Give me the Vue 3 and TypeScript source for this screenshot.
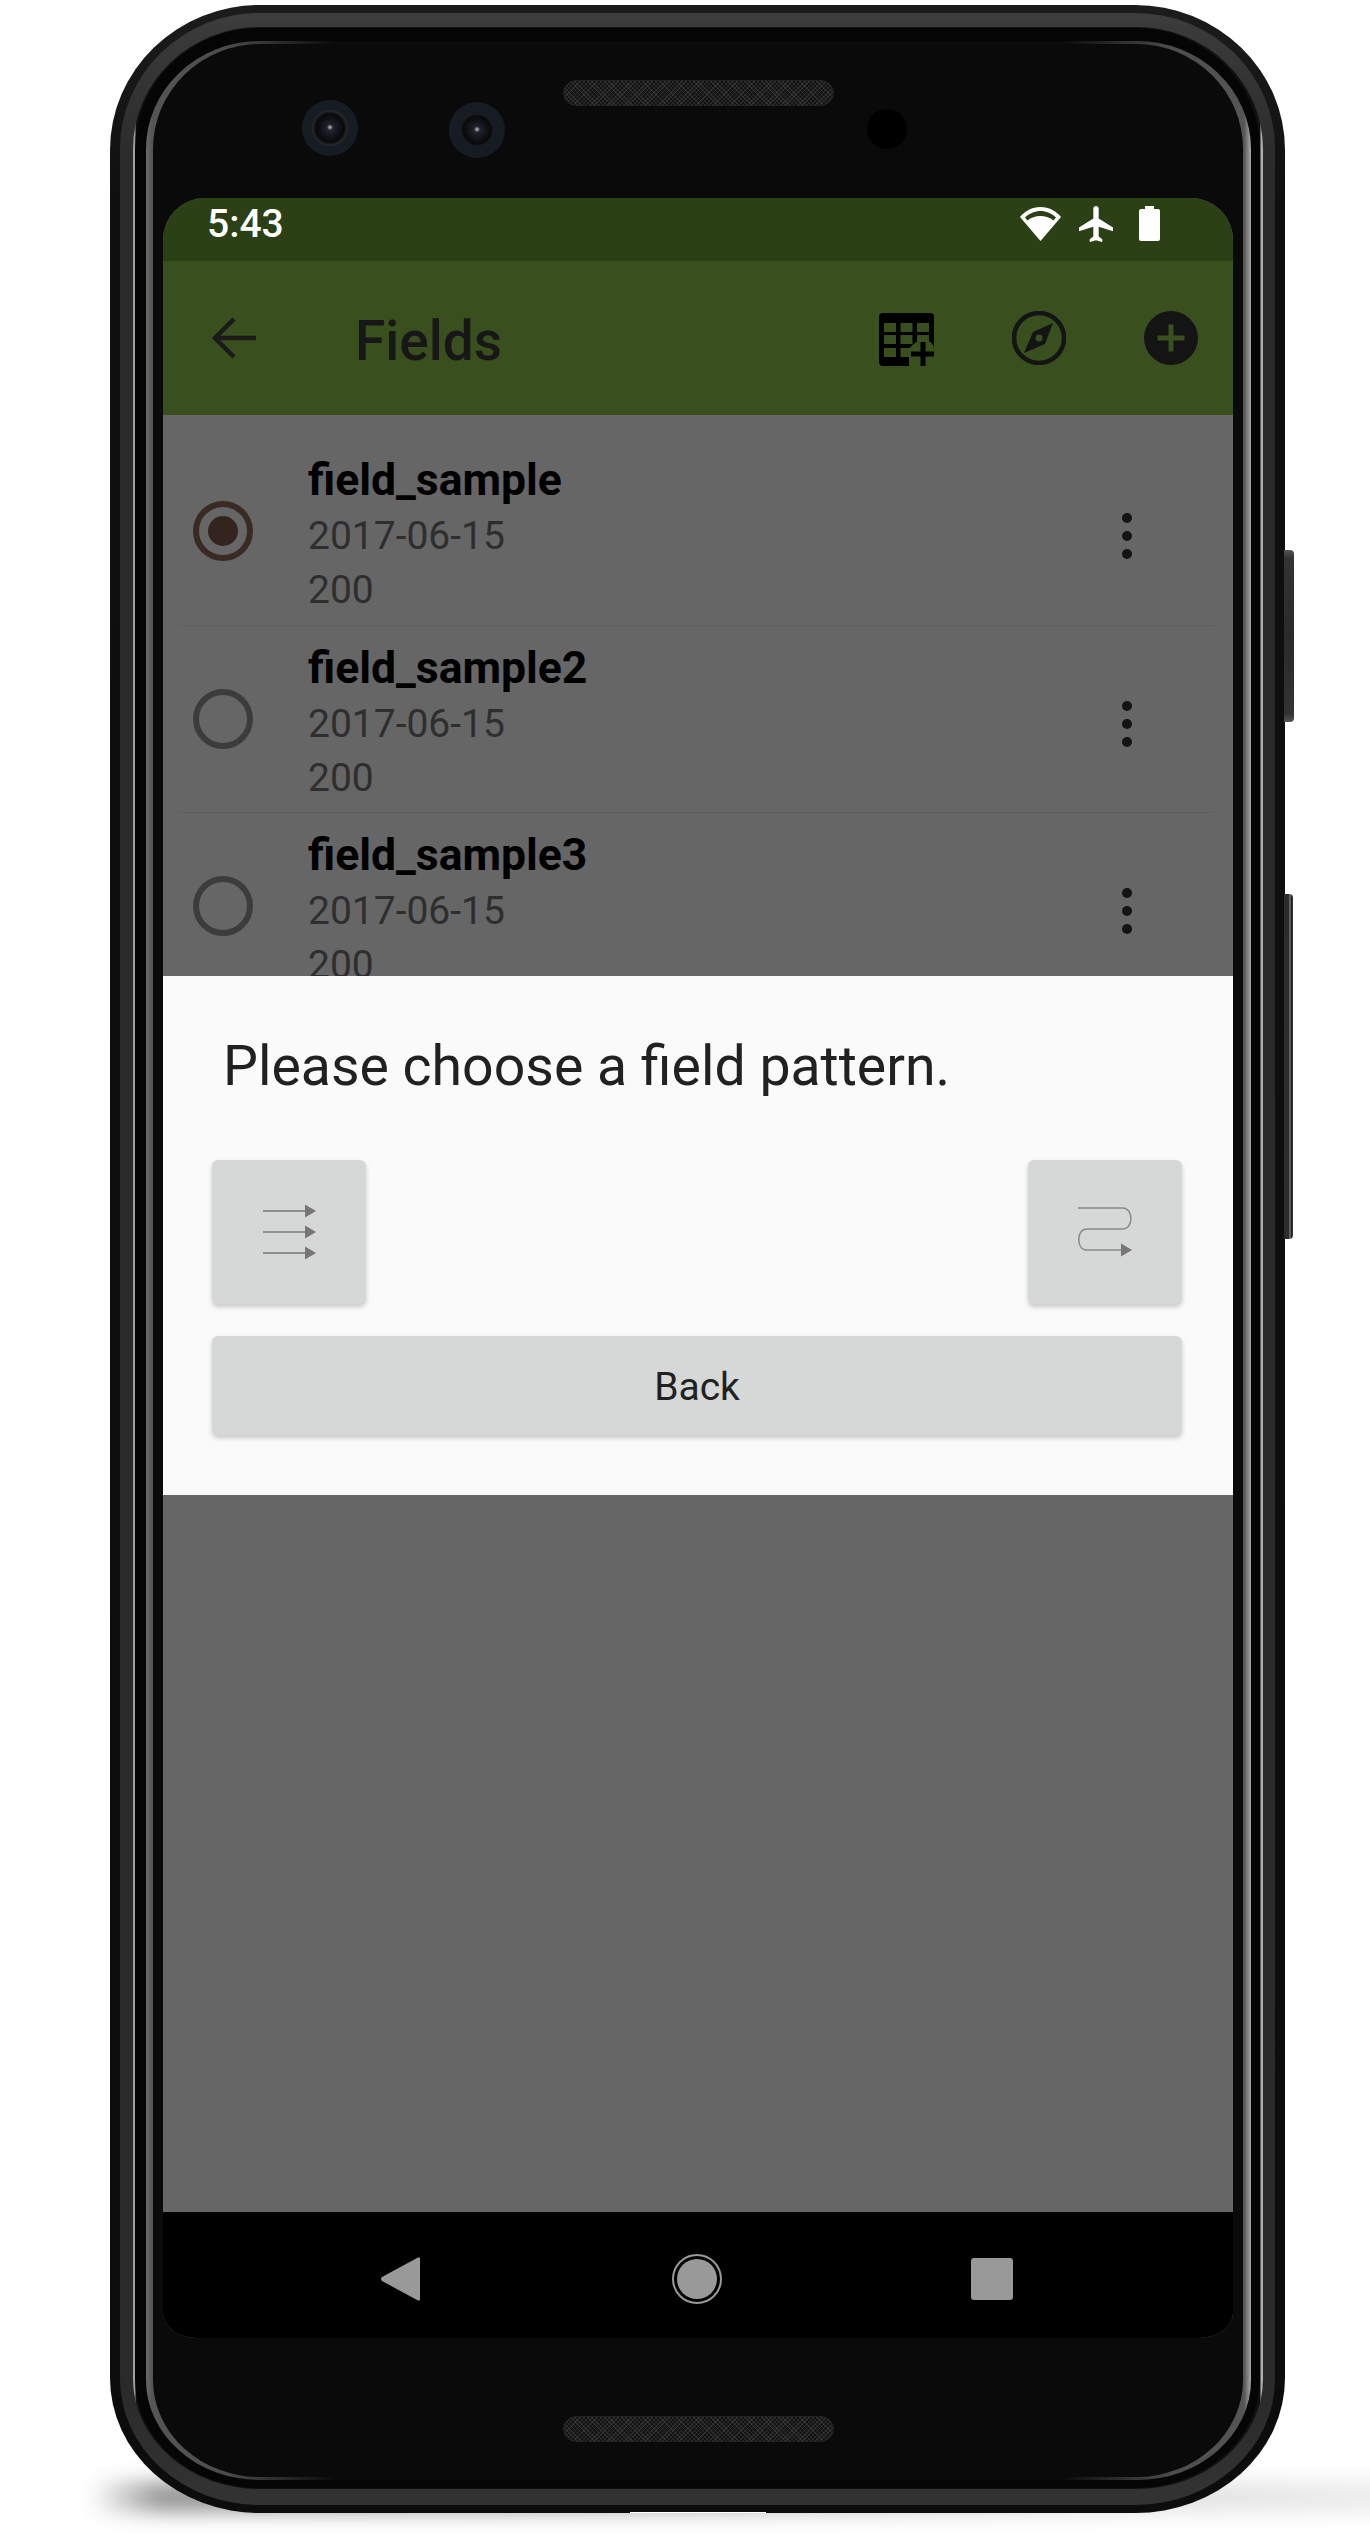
<script setup lang="ts">
interface Field {
  name: string
  date: string
  size: number
  selected: boolean
}

const fields: Field[] = [
  { name: 'field_sample', date: '2017-06-15', size: 200, selected: true },
  { name: 'field_sample2', date: '2017-06-15', size: 200, selected: false },
  { name: 'field_sample3', date: '2017-06-15', size: 200, selected: false },
]

const tableCols = [5, 21.5, 38]
const tableRows = [10, 22, 35]
</script>

<template>
  <div class="page">
    <div class="floor-shadow"></div>
    <div class="phone">
      <div class="side-btn power"></div>
      <div class="side-btn volume"></div>
      <div class="port"></div>
      <div class="frame-mid">
        <div class="frame-edge">
          <div class="frame-gap">
            <div class="frame-inner">
              <div class="bezel">
                <div class="bezel-top">
                  <div class="camera"><div class="lens"></div></div>
                  <div class="camera second"><div class="lens small"></div></div>
                  <div class="speaker top"></div>
                  <div class="earpiece"></div>
                </div>

                <div class="screen">
                  <div class="status-bar">
                    <span class="time">5:43</span>
                    <div class="status-icons">
                      <svg width="41" height="34" viewBox="0 0 41 34">
                        <path d="M20.5 34 L0 10 C5 4 12 0 20.5 0 C29 0 36 4 41 10 Z" fill="#fff" />
                        <path d="M5 10.5 C9 6.5 15 4 20.5 4 C26 4 32 6.5 36 10.5 L33.5 13.5 C30 10.5 25.5 9 20.5 9 C15.5 9 11 10.5 7.5 13.5 Z" fill="#2b4015" />
                      </svg>
                      <svg class="plane" width="34" height="36" viewBox="2 2 19 20" preserveAspectRatio="none">
                        <path d="M21 16v-2l-8-5V3.5c0-.83-.67-1.5-1.5-1.5S10 2.67 10 3.5V9l-8 5v2l8-2.5V19l-2 1.5V22l3.5-1 3.5 1v-1.5L13 19v-5.5l8 2.5z" fill="#fff" />
                      </svg>
                      <svg class="battery" width="21" height="35" viewBox="0 0 21 35">
                        <path d="M6 0h9v3h4a2 2 0 0 1 2 2v28a2 2 0 0 1-2 2H2a2 2 0 0 1-2-2V5a2 2 0 0 1 2-2h4z" fill="#fff" />
                      </svg>
                    </div>
                  </div>

                  <div class="toolbar">
                    <svg class="back-arrow" width="44" height="42" viewBox="0 0 44 42">
                      <path d="M44 21H3M22 2 3 21l19 19" fill="none" stroke="#1a1a1a" stroke-width="4.5" />
                    </svg>
                    <span class="toolbar-title">Fields</span>
                    <svg class="tool table" width="55" height="53" viewBox="0 0 55 53">
                      <rect width="55" height="53" rx="4" fill="#000" />
                      <template v-for="x in tableCols" :key="x">
                        <rect v-for="y in tableRows" :key="y" :x="x" :y="y" width="12" height="9" fill="#394f1e" />
                      </template>
                      <path d="M30 53 V36 Q36 27 46 27 Q55 29 55 36 V53 Z" fill="#394f1e" />
                      <path d="M44 29v24M32 41h23" stroke="#000" stroke-width="5" fill="none" />
                    </svg>
                    <svg class="tool compass" width="54" height="54" viewBox="0 0 54 54">
                      <circle cx="27" cy="27" r="25" fill="none" stroke="#141414" stroke-width="4.5" />
                      <path fill-rule="evenodd" d="M41 12 33 33 12 42 21 21ZM27 23.5a3.5 3.5 0 1 0 0 7 3.5 3.5 0 0 0 0-7Z" fill="#141414" />
                    </svg>
                    <svg class="tool plus" width="54" height="54" viewBox="0 0 54 54">
                      <circle cx="27" cy="27" r="27" fill="#141414" />
                      <path d="M27 13.5v27M13.500 27h27" stroke="#394f1e" stroke-width="5" fill="none" />
                    </svg>
                  </div>

                  <div class="list">
                    <div v-for="f in fields" :key="f.name" class="row">
                      <div class="radio" :class="{ on: f.selected }">
                        <div v-if="f.selected" class="radio-dot"></div>
                      </div>
                      <div class="row-text">
                        <div class="row-name">{{ f.name }}</div>
                        <div class="row-meta">{{ f.date }}</div>
                        <div class="row-meta">{{ f.size }}</div>
                      </div>
                      <div class="kebab"><i></i><i></i><i></i></div>
                    </div>
                  </div>

                  <div class="dialog">
                    <div class="dialog-title">Please choose a field pattern.</div>
                    <div class="pattern-row">
                      <button class="pattern-btn">
                        <svg width="53" height="56" viewBox="0 0 53 56">
                          <g fill="#777">
                            <path d="M0 7h42" stroke="#777" stroke-width="1.500" />
                            <path d="M42 0.500 53 7 42 13.500Z" />
                            <path d="M0 28h42" stroke="#777" stroke-width="1.500" />
                            <path d="M42 21.500 53 28 42 34.500Z" />
                            <path d="M0 49h42" stroke="#777" stroke-width="1.500" />
                            <path d="M42 42.500 53 49 42 55.500Z" />
                          </g>
                        </svg>
                      </button>
                      <button class="pattern-btn">
                        <svg width="54" height="50" viewBox="0 0 54 50">
                          <path d="M0 1H45C49 1 53 5 53 11.500S49 22 45 22H9C4 22 0.800 26 0.800 32.500S4 43 9 43H44" fill="none" stroke="#8a8a8a" stroke-width="1.500" />
                          <path d="M43 36.500 54 43 43 49.500Z" fill="#777" />
                        </svg>
                      </button>
                    </div>
                    <button class="back-btn">Back</button>
                  </div>

                  <div class="scrim"></div>

                  <div class="nav-bar">
                    <svg width="39" height="44" viewBox="0 0 39 44">
                      <path d="M37 0.500C38.500 0 39 1 39 2V42C39 43 38.500 44 37 43.500L1 24C-0.300 23 -0.300 21 1 20Z" fill="#999" />
                    </svg>
                    <div class="nav-home"><div class="nav-home-dot"></div></div>
                    <div class="nav-square"></div>
                  </div>
                </div>

                <div class="bezel-bottom">
                  <div class="speaker"></div>
                </div>
              </div>
            </div>
          </div>
        </div>
      </div>
    </div>
  </div>
</template>

<style scoped>
.page {
  position: relative;
  width: 1370px;
  height: 2534px;
  padding: 5px 85px 0 110px;
  box-sizing: border-box;
  overflow: hidden;
  background: #fff;
  font-family: Roboto, 'Liberation Sans', sans-serif;
}

.floor-shadow {
  position: absolute;
  left: 90px;
  right: -30px;
  top: 2482px;
  height: 30px;
  background: linear-gradient(to right, transparent 0, rgba(0, 0, 0, 0.42) 70px, rgba(0, 0, 0, 0.38) 30%, rgba(0, 0, 0, 0.12) 80%, rgba(0, 0, 0, 0.07) 100%);
  filter: blur(10px);
}

.phone {
  position: relative;
  height: 2508px;
  box-sizing: border-box;
  padding: 8px 10px;
  border-radius: 150px 150px 150px 150px / 145px 145px 135px 135px;
  background: linear-gradient(to bottom, #1c1c1c 0, #0f0f0f 200px, #0c0c0c 100%);
}

.side-btn {
  position: absolute;
  right: -9px;
  width: 10px;
  border-radius: 0 4px 4px 0;
  background: #2e2e2e;
}

.power {
  top: 545px;
  height: 172px;
  background: linear-gradient(to bottom, #555 0, #333 8px, #2a2a2a 50%, #333 calc(100% - 8px), #555 100%);
}

.volume {
  top: 889px;
  height: 345px;
  width: 9px;
  right: -8px;
  background: linear-gradient(to right, #2c2c2c 0, #2c2c2c 5px, #9a9a9a 6px, #1a1a1a 7px, #3a3a3a 100%);
}

.port {
  position: absolute;
  left: 520px;
  bottom: 0;
  width: 136px;
  height: 1px;
  background: #fff;
}

.frame-mid {
  height: 100%;
  box-sizing: border-box;
  padding: 14px 12px 16px 13px;
  border-radius: 140px 140px 140px 140px / 136px 136px 126px 126px;
  background: linear-gradient(to bottom, #3e3e3e 0, #3a3a3a 14px, #2a2a2a 160px, #2a2a2a calc(100% - 120px), #323232 calc(100% - 16px), #323232 100%);
}

.frame-edge {
  height: 100%;
  box-sizing: border-box;
  padding: 1px 3px 1px 2px;
  border-radius: 127px 127px 127px 127px / 122px 122px 110px 110px;
  background: linear-gradient(to right, #a0a0a0 0, #a0a0a0 2px, #111 3px, #111 calc(100% - 3px), #b0b0b0 calc(100% - 2px), #b0b0b0 100%);
}

.frame-gap {
  height: 100%;
  box-sizing: border-box;
  padding: 13px 9px 8px 11px;
  border-radius: 125px 125px 125px 125px / 121px 121px 109px 109px;
  background: #050505;
}

.frame-inner {
  height: 100%;
  box-sizing: border-box;
  padding: 3px 8px 3px 7px;
  border-radius: 114px 114px 114px 114px / 108px 108px 100px 100px;
  background: linear-gradient(to right, #6a6a6a 0, #555 6px, #4c4c4c 80px, #0a0a0a 190px, #0a0a0a calc(100% - 190px), #4c4c4c calc(100% - 80px), #555 calc(100% - 7px), #a8a8a8 100%);
}

.bezel {
  height: 100%;
  box-sizing: border-box;
  padding: 0 10px;
  border-radius: 107px 107px 107px 107px / 105px 105px 97px 97px;
  background: #0a0a0a;
  display: flex;
  flex-direction: column;
}

.bezel-top {
  height: 154px;
  flex-shrink: 0;
  box-sizing: border-box;
  padding-left: 139px;
  display: flex;
  align-items: flex-start;
}

.camera {
  width: 56px;
  height: 56px;
  flex-shrink: 0;
  margin-top: 56px;
  border-radius: 50%;
  background: #171c24;
  display: flex;
  align-items: center;
  justify-content: center;
}

.camera.second {
  margin-top: 58px;
  margin-left: 91px;
}

.lens {
  width: 36px;
  height: 36px;
  border-radius: 50%;
  background:
    radial-gradient(circle at 50% 48%, #bbb 0, #777 1.500px, transparent 3px),
    radial-gradient(circle at 50% 50%, #262b38 0, #121318 9px, #08090b 14px, #2c2e32 18px);
}

.lens.small {
  width: 32px;
  height: 32px;
}

.speaker {
  width: 271px;
  height: 26px;
  box-sizing: border-box;
  border: 1px solid #222;
  border-radius: 13px;
  background:
    repeating-linear-gradient(45deg, rgba(90, 90, 90, 0.3) 0 1px, transparent 1px 3px),
    repeating-linear-gradient(-45deg, rgba(90, 90, 90, 0.3) 0 1px, transparent 1px 3px),
    #131313;
}

.speaker.top {
  flex-shrink: 0;
  margin-top: 36px;
  margin-left: 58px;
}

.earpiece {
  width: 40px;
  height: 40px;
  flex-shrink: 0;
  margin-top: 65px;
  margin-left: 33px;
  border-radius: 50%;
  background: #000;
}

.screen {
  height: 2140px;
  flex-shrink: 0;
  overflow: hidden;
  border-radius: 42px 42px 34px 34px / 42px 42px 25px 25px;
  display: flex;
  flex-direction: column;
  background: #666;
}

.status-bar {
  height: 63px;
  flex-shrink: 0;
  box-sizing: border-box;
  padding: 0 73px 12px 44px;
  background: #2b4015;
  display: flex;
  align-items: center;
  justify-content: space-between;
}

.time {
  color: #fff;
  font-size: 39px;
  font-weight: 500;
  line-height: 44px;
}

.status-icons {
  display: flex;
  align-items: center;
}

.plane {
  margin-left: 18px;
}

.battery {
  margin-left: 26px;
}

.toolbar {
  height: 154px;
  flex-shrink: 0;
  box-sizing: border-box;
  padding-left: 49px;
  background: #394f1e;
  display: flex;
  align-items: center;
}

.toolbar-title {
  margin: 6px 0 0 99px;
  font-size: 55px;
  font-weight: 500;
  color: #171717;
}

.tool {
  flex-shrink: 0;
}

.table {
  margin-left: auto;
  margin-top: 3px;
}

.compass {
  margin-left: 78px;
}

.plus {
  margin-left: 78px;
  margin-right: 35px;
}

.list {
  height: 561px;
  flex-shrink: 0;
  box-sizing: border-box;
  padding-top: 23px;
  overflow: hidden;
  background: #666;
}

.row {
  height: 187.5px;
  box-sizing: border-box;
  margin: 0 18px 0 16px;
  padding: 15px 0 0 14px;
  border-bottom: 1px solid #5f5f5f;
  display: flex;
}

.radio {
  width: 60px;
  height: 60px;
  flex-shrink: 0;
  box-sizing: border-box;
  margin-top: 48px;
  border: 6px solid #3c3c3c;
  border-radius: 50%;
  display: flex;
  align-items: center;
  justify-content: center;
}

.radio.on {
  border-color: #3a2a24;
}

.radio-dot {
  width: 30px;
  height: 30px;
  border-radius: 50%;
  background: #33241f;
}

.row-text {
  margin-left: 55px;
  flex: 1;
}

.row-name {
  margin-bottom: 2px;
  font-size: 44.5px;
  font-weight: 700;
  line-height: 54px;
  color: #000;
}

.row-meta {
  font-size: 39px;
  line-height: 54px;
  color: #2e2e2e;
}

.kebab {
  width: 10px;
  margin: 60px 83px 0 0;
  display: flex;
  flex-direction: column;
  gap: 8px;
}

.kebab i {
  display: block;
  width: 10px;
  height: 10px;
  border-radius: 50%;
  background: #141414;
}

.dialog {
  height: 519px;
  flex-shrink: 0;
  box-sizing: border-box;
  padding: 58px 51px 0 49px;
  background: #fafafa;
}

.dialog-title {
  height: 64px;
  margin-left: 11px;
  font-size: 55.4px;
  font-weight: 440;
  line-height: 66px;
  color: #212121;
}

.pattern-row {
  margin-top: 62px;
  display: flex;
  justify-content: space-between;
}

.pattern-btn {
  width: 154px;
  height: 144px;
  padding: 0;
  border: none;
  border-radius: 6px;
  background: #d6d7d7;
  box-shadow: 0 3px 5px rgba(0, 0, 0, 0.2);
  display: flex;
  align-items: center;
  justify-content: center;
}

.back-btn {
  display: block;
  width: 100%;
  height: 99px;
  margin-top: 32px;
  padding: 2px 0 0;
  border: none;
  border-radius: 6px;
  background: #d6d7d7;
  box-shadow: 0 3px 5px rgba(0, 0, 0, 0.2);
  font-family: Roboto, 'Liberation Sans', sans-serif;
  font-size: 39px;
  font-weight: 440;
  color: #212121;
}

.scrim {
  flex: 1;
  background: #666;
}

.nav-bar {
  height: 126px;
  flex-shrink: 0;
  box-sizing: border-box;
  padding: 8px 0 0 218px;
  background: #000;
  display: flex;
  align-items: center;
}

.nav-home {
  width: 50px;
  height: 50px;
  margin-left: 252px;
  box-sizing: border-box;
  border: 2px solid #999;
  border-radius: 50%;
  display: flex;
  align-items: center;
  justify-content: center;
}

.nav-home-dot {
  width: 40px;
  height: 40px;
  border-radius: 50%;
  background: #999;
}

.nav-square {
  width: 42px;
  height: 42px;
  margin-left: 249px;
  border-radius: 3px;
  background: #999;
}

.bezel-bottom {
  flex: 1;
  display: flex;
  justify-content: center;
  padding-top: 78px;
}
</style>

<style>
html,
body {
  margin: 0;
  background: #fff;
}
</style>
